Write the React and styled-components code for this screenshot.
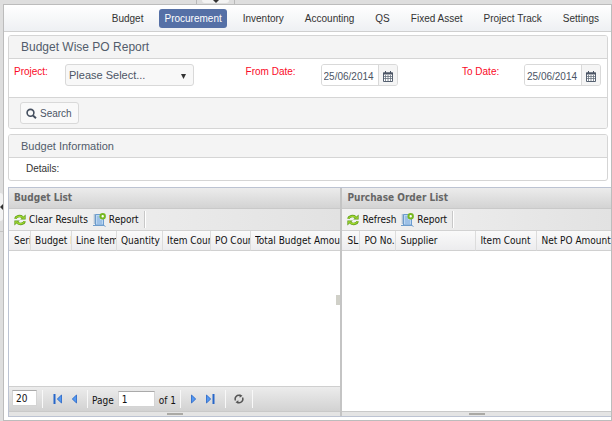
import React from "react";
import styled, { createGlobalStyle } from "styled-components";

const Global = createGlobalStyle`
  *, *::before, *::after { box-sizing: border-box; }
  body { margin: 0; background: #dcdcdc; font: 10px/14px "Liberation Sans", Arial, sans-serif; color: #333; }
  button, input, select { font: inherit; color: inherit; margin: 0; }
  svg { display: block; flex: none; }
`;

const Shell = styled.div`
  min-height: 100vh;
  display: grid;
  grid-template: 4px 1fr / 3px minmax(0, 1fr);
`;
const TopRail = styled.div`
  grid-column: 1 / -1;
  display: flex;
  padding-left: 196px;
  background: #dedede;
`;
const TopTab = styled.div`
  width: 39px;
  display: flex;
  justify-content: center;
  border: solid #b9b9b9;
  border-width: 0 1px;
`;
const CollapseButton = styled.button`
  display: flex;
  align-items: center;
  justify-content: center;
  padding: 0;
  border: 0;
  background: #f3f3f3;
  width: ${(p) => (p.$side ? 3 : 27)}px;
  height: ${(p) => (p.$side ? 28 : 3)}px;
  border-radius: ${(p) => (p.$side ? "0 3px 3px 0" : "0 0 4px 4px")};
`;
const SideRail = styled.div`
  padding-top: 189px;
  background: #dedede;
`;
const SideTab = styled.div`
  height: 39px;
  border: solid #c3c3c3;
  border-width: 0 0 1px;
`;
const Main = styled.main`
  display: flex;
  flex-direction: column;
  background: #fff;
  border: 1px solid #bcbcbc;
`;
const Nav = styled.nav`
  display: flex;
  justify-content: flex-end;
  align-items: center;
  gap: 11px;
  height: 27px;
  padding: 1px 7px 0;
  border-bottom: 1px solid #cfcfcf;
  background: linear-gradient(#fff, #eef0f3);
`;
const NavLink = styled.a`
  padding: 3px 5px 2px;
  border-radius: 3px;
  text-decoration: none;
  white-space: nowrap;
  color: ${(p) => (p.$active ? "#fff" : "#333")};
  background: ${(p) => (p.$active ? "#5570a6" : "transparent")};
`;
const Panels = styled.div`
  display: flex;
  flex-direction: column;
  gap: 5px;
  padding: 3px 3px 6px 4px;
`;
const Panel = styled.section`
  border: 1px solid #d5d5d5;
  border-radius: 3px;
  background: #fff;
  overflow: hidden;
`;
const PanelTitle = styled.h2`
  margin: 0;
  padding: 1px 12px 0;
  border-bottom: 1px solid #d5d5d5;
  background: #f4f4f4;
  color: #525c6b;
  font-size: ${(p) => (p.$large ? 12 : 11)}px;
  font-weight: 400;
  line-height: 21px;
`;
const Form = styled.form``;
const Fields = styled.div`
  display: grid;
  grid-template-columns: 51px 180fr 75px 141fr 62px 77px;
  align-items: start;
  padding: 5px 6px 11px 5px;
`;
const Label = styled.label`
  padding-top: 1px;
  color: #fa0a28;
`;
const Box = styled.div`
  display: flex;
  align-items: center;
  height: 22px;
  width: ${(p) => p.$width}px;
  border: 1px solid #d9d9d9;
  border-radius: 3px;
  background: #f8f8f8;
  color: #4c5565;
  overflow: hidden;
`;
const Select = styled.select`
  appearance: none;
  flex: 1;
  min-width: 0;
  height: 20px;
  padding: 0 3px;
  border: 0;
  background: transparent;
  font-size: 11px;
`;
const DateInput = styled.input`
  flex: 1;
  min-width: 0;
  height: 20px;
  padding: 2px 2px 0;
  border: 0;
  background: #fff;
`;
const IconButton = styled.button`
  display: flex;
  align-items: center;
  justify-content: center;
  width: 19px;
  height: 20px;
  padding: 2px 0 0;
  border: 0;
  border-left: 1px solid #d9d9d9;
  background: #f5f5f5;
`;
const ArrowSlot = styled.span`
  padding: 2px 6px 0 0;
`;
const Actions = styled.div`
  padding: 4px 11px;
  border-top: 1px solid #d5d5d5;
  background: #f4f4f4;
`;
const SearchButton = styled.button`
  display: flex;
  align-items: center;
  gap: 3px;
  height: 22px;
  padding: 1px 6px 0 5px;
  border: 1px solid #d9d9d9;
  border-radius: 3px;
  background: #f9f9f9;
  color: #4c5565;
  font-size: 10px;
`;
const Details = styled.div`
  padding: 4px 17px;
`;
const Lists = styled.div`
  flex: 1;
  display: grid;
  grid-template-columns: 334fr 269fr;
  margin: 0 0 3px 4px;
  border: solid #bcc3d2;
  border-width: 1px 0 1px 1px;
  color: #111;
  font: 10px/14px "DejaVu Sans Condensed", "Noto Sans", sans-serif;
`;
const List = styled.section`
  position: relative;
  display: flex;
  flex-direction: column;
  min-width: 0;
  border-right: ${(p) => (p.$divided ? "2px solid #c4c4c4" : "0")};
`;
const ListTitle = styled.h3`
  margin: 0;
  padding: 0 5px;
  border-bottom: 1px solid #c9c9c9;
  background: linear-gradient(#ececec, #d3d3d3);
  color: #666;
  font-size: 10px;
  line-height: 20px;
`;
const ToolBar = styled.div`
  display: flex;
  align-items: center;
  gap: 5px;
  height: 22px;
  padding-left: 5px;
  border-bottom: 1px solid #d2d2d2;
  background: linear-gradient(90deg, #f2f2f2, #e2e2e2);
`;
const Tool = styled.button`
  display: flex;
  align-items: center;
  gap: 3px;
  padding: 0;
  border: 0;
  background: none;
  white-space: nowrap;
`;
const Separator = styled.span`
  width: 2px;
  height: 17px;
  border-left: 1px solid #c8c8c8;
  border-right: 1px solid #fff;
`;
const Table = styled.table`
  width: 100%;
  table-layout: fixed;
  border-collapse: separate;
  border-spacing: 0;
`;
const Th = styled.th`
  height: 20px;
  padding: 0 0 0 4px;
  border-right: 1px solid #dcdcdc;
  border-bottom: 1px solid #d0d0d0;
  background: linear-gradient(#fafafa, #ececee);
  font-weight: 400;
  text-align: left;
  &:first-child { padding-left: 5px; }
  &:last-child { border-right: 0; }
`;
const HeadText = styled.div`
  overflow: hidden;
  white-space: nowrap;
`;
const Space = styled.div`
  flex: 1;
`;
const Pager = styled.div`
  display: flex;
  align-items: center;
  height: 25px;
  padding: 0 3px;
  border-top: 1px solid #cfcfcf;
  background: linear-gradient(#ececec, #d2d2d2);
`;
const PagerGroup = styled.div`
  display: flex;
  align-items: center;
  gap: ${(p) => p.$gap || 4}px;
  height: 18px;
  padding: 0 ${(p) => p.$pad || 4}px;
  border-left: 1px solid #f8f8f8;
`;
const PagerLabel = styled.label`
  display: flex;
  align-items: center;
  gap: 4px;
`;
const PagerText = styled.span`
  padding-top: 3px;
`;
const PagerInput = styled.input`
  width: ${(p) => p.$width}px;
  height: 16px;
  padding: 0 3px;
  border: 1px solid #d4d4d4;
  border-top-color: #aaa;
  background: #fff;
`;
const SizeSlot = styled.div`
  display: flex;
  padding: 0 5px 2px 0;
`;
const Splitter = styled.div`
  display: flex;
  justify-content: center;
  align-items: center;
  height: 5px;
  border-top: 1px solid #c9c9c9;
  background: #e4e4e4;
`;
const Grip = styled.span`
  width: 16px;
  height: 2px;
  background: #aaa9a5;
`;
const SideGrip = styled.span`
  position: absolute;
  right: 0;
  top: 47%;
  width: 4px;
  height: 10px;
  background: #d0d0c8;
`;

const Triangle = ({ w, h, d, color = "#333" }) => (
  <svg width={w} height={h} viewBox={`0 0 ${w} ${h}`}><path d={d} fill={color} /></svg>
);
const Calendar = () => (
  <svg width="10" height="11" viewBox="0 0 10 11">
    <path d="M.5 2h9v8.5h-9z" fill="#fff" stroke="#556070" />
    <path d="M0 1.5h10v2H0zM2 0h1v2H2zM7 0h1v2H7z" fill="#4c5565" />
    <path d="M2.5 4v6M5 4v6M7.5 4v6M1 5.5h8M1 7.5h8" stroke="#68727f" strokeWidth=".8" />
  </svg>
);
const Magnifier = () => (
  <svg width="11" height="11" viewBox="0 0 11 11">
    <circle cx="4.5" cy="4.8" r="3.4" fill="none" stroke="#465060" strokeWidth="1.6" />
    <path d="M7 7.6l3 2.6" stroke="#465060" strokeWidth="2" />
  </svg>
);
const Refresh = () => (
  <svg width="12" height="12" viewBox="0 0 12 12">
    <path d="M1.300 4.800C2 1.900 6 1.200 8.600 3.200" fill="none" stroke="#5f9c1a" strokeWidth="2.600" />
    <path d="M11.600.4v5H6.200z" fill="#5f9c1a" />
    <path d="M1.500 4.600C2.400 2 6 1.500 8.800 3.400" fill="none" stroke="#a0d82e" strokeWidth="1.300" />
    <path d="M10.900 1.900v2.800H8z" fill="#a0d82e" />
    <path d="M10.700 7.200C10 10.100 6 10.800 3.400 8.800" fill="none" stroke="#5f9c1a" strokeWidth="2.600" />
    <path d="M.4 11.600v-5h5.400z" fill="#5f9c1a" />
    <path d="M10.500 7.400C9.600 10 6 10.500 3.200 8.600" fill="none" stroke="#a0d82e" strokeWidth="1.300" />
    <path d="M1.100 10.100V7.300H4z" fill="#a0d82e" />
  </svg>
);
const Report = () => (
  <svg width="13" height="14" viewBox="0 0 13 14">
    <path d="M2.500 1.500h8v10.500h-8z" fill="#bcd7f2" stroke="#6a9cd0" />
    <path d="M.7 2h2M.7 4h2M.7 6h2M.7 8h2M.7 10h2" stroke="#7298bd" />
    <path d="M4 4h3M4 6h3M4 8h5M4 10h5" stroke="#6f9fd4" strokeWidth=".8" />
    <path d="M0 12.500h11l1.500 1" stroke="#6e9ccb" fill="none" />
    <circle cx="9.700" cy="3.300" r="2.200" fill="#fff" stroke="#76b820" strokeWidth="2" />
  </svg>
);
const PageArrow = ({ end, flip }) => (
  <svg width={end ? 9 : 5} height="10" viewBox={end ? "0 0 9 10" : "0 0 5 10"}>
    <g transform={flip ? `translate(${end ? 9 : 5} 0) scale(-1 1)` : undefined}>
      <path d="M.5 1L4.700 5 .5 9z" fill="#5398f2" stroke="#2463c5" strokeWidth=".8" />
      {end && <path d="M6.500 0h2v10h-2z" fill="#2766c9" />}
    </g>
  </svg>
);
const Reload = () => (
  <svg width="10" height="10" viewBox="0 0 10 10">
    <path d="M1.500 6.500A3.600 3.600 0 0 1 6 1.600M8.500 3.500A3.600 3.600 0 0 1 4 8.400" fill="none" stroke="#555" strokeWidth="1.500" />
    <path d="M5.500 0l3 1.800-2.800 2zM4.500 10l-3-1.800 2.800-2z" fill="#555" />
  </svg>
);

const menu = ["Budget", "Procurement", "Inventory", "Accounting", "QS", "Fixed Asset", "Project Track", "Settings"];
const budgetColumns = [["Serial", 22], ["Budget Item", 41], ["Line Item", 45], ["Quantity", 46], ["Item Count", 48], ["PO Count", 40], ["Total Budget Amount"]];
const orderColumns = [["SL", 18], ["PO No.", 36], ["Supplier", 80], ["Item Count", 61], ["Net PO Amount"]];

const DateField = ({ id, label }) => (
  <>
    <Label htmlFor={id}>{label}</Label>
    <Box $width={77}>
      <DateInput id={id} defaultValue="25/06/2014" />
      <IconButton type="button" aria-label={`Pick ${label}`}><Calendar /></IconButton>
    </Box>
  </>
);
const DataTable = ({ columns }) => (
  <Table>
    <colgroup>{columns.map(([name, width]) => <col key={name} width={width} />)}</colgroup>
    <thead><tr>{columns.map(([name]) => <Th key={name}><HeadText>{name}</HeadText></Th>)}</tr></thead>
  </Table>
);
const ListTools = ({ action }) => (
  <ToolBar>
    <Tool><Refresh />{action}</Tool>
    <Tool><Report />Report</Tool>
    <Separator />
  </ToolBar>
);

export default function App() {
  return (
    <Shell>
      <Global />
      <TopRail>
        <TopTab>
          <CollapseButton aria-label="Collapse header"><Triangle w={6} h={3} d="M0 0h6L3 3z" /></CollapseButton>
        </TopTab>
      </TopRail>
      <SideRail>
        <SideTab>
          <CollapseButton $side aria-label="Collapse sidebar"><Triangle w={3} h={6} d="M3 0v6L0 3z" /></CollapseButton>
        </SideTab>
      </SideRail>
      <Main>
        <Nav>
          {menu.map((name) => <NavLink key={name} href="#" $active={name === "Procurement"}>{name}</NavLink>)}
        </Nav>
        <Panels>
          <Panel>
            <PanelTitle $large>Budget Wise PO Report</PanelTitle>
            <Form onSubmit={(e) => e.preventDefault()}>
              <Fields>
                <Label htmlFor="project">Project:</Label>
                <Box $width={129}>
                  <Select id="project"><option>Please Select...</option></Select>
                  <ArrowSlot><Triangle w={7} h={5} d="M1 0h5L3.500 5z" /></ArrowSlot>
                </Box>
                <DateField id="from" label="From Date:" />
                <DateField id="to" label="To Date:" />
              </Fields>
              <Actions><SearchButton><Magnifier />Search</SearchButton></Actions>
            </Form>
          </Panel>
          <Panel>
            <PanelTitle>Budget Information</PanelTitle>
            <Details>Details:</Details>
          </Panel>
        </Panels>
        <Lists>
          <List $divided>
            <ListTitle>Budget List</ListTitle>
            <ListTools action="Clear Results" />
            <DataTable columns={budgetColumns} />
            <Space />
            <Pager>
              <SizeSlot><PagerInput $width={25} aria-label="Rows per page" defaultValue="20" /></SizeSlot>
              <PagerGroup $gap={10} $pad={10}>
                <Tool aria-label="First page"><PageArrow end flip /></Tool>
                <Tool aria-label="Previous page"><PageArrow flip /></Tool>
              </PagerGroup>
              <PagerGroup>
                <PagerLabel><PagerText>Page</PagerText><PagerInput $width={37} defaultValue="1" /></PagerLabel>
                <PagerText>of 1</PagerText>
              </PagerGroup>
              <PagerGroup $gap={10} $pad={10}>
                <Tool aria-label="Next page"><PageArrow /></Tool>
                <Tool aria-label="Last page"><PageArrow end /></Tool>
              </PagerGroup>
              <PagerGroup $pad={8}><Tool aria-label="Reload"><Reload /></Tool></PagerGroup>
              <PagerGroup />
            </Pager>
            <Splitter><Grip /></Splitter>
            <SideGrip />
          </List>
          <List>
            <ListTitle>Purchase Order List</ListTitle>
            <ListTools action="Refresh" />
            <DataTable columns={orderColumns} />
            <Space />
            <Splitter><Grip /></Splitter>
          </List>
        </Lists>
      </Main>
    </Shell>
  );
}
